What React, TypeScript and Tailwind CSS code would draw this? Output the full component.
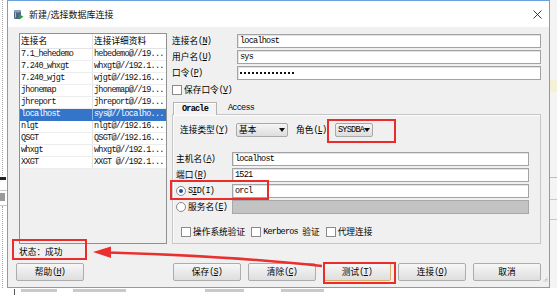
import React from "react";

const MONO = "font-['Liberation_Mono',monospace] text-[8.5px] tracking-[-0.75px] leading-none";
const CJK = "font-['Noto_Sans_CJK_SC',sans-serif] text-[8.7px] leading-none";

function K({ k }: { k: string }) {
  return (
    <span className={MONO}>
      (<span className="underline underline-offset-1">{k}</span>)
    </span>
  );
}

function Label({ text, k }: { text: string; k?: string }) {
  return (
    <span className={`${CJK} text-black whitespace-nowrap flex items-center`}>
      {text}
      {k && <K k={k} />}
    </span>
  );
}

function Input({ value, disabled, className = "" }: { value?: string; disabled?: boolean; className?: string }) {
  return (
    <div
      className={`h-[14px] border ${
        disabled ? "bg-[#c3c3c3] border-[#a8a8a8]" : "bg-white border-[#a3a3a3] shadow-[inset_1px_1px_0_#e2e2e2]"
      } flex items-center pl-[2px] ${className}`}
    >
      {value && <span className={`${MONO} text-black`}>{value}</span>}
    </div>
  );
}

function Check() {
  return <div className="w-[10px] h-[10px] bg-white border border-[#8a8a8a] shrink-0" />;
}

function Radio({ checked }: { checked?: boolean }) {
  return (
    <div className="w-[10px] h-[10px] rounded-full bg-white border border-[#8a8a8a] shrink-0 flex items-center justify-center">
      {checked && <div className="w-[4px] h-[4px] rounded-full bg-[#1d4fa6]" />}
    </div>
  );
}

function Select({ children, w }: { children: React.ReactNode; w: string }) {
  return (
    <div
      className={`${w} h-[14px] rounded-[2px] border border-[#a9a9a9] bg-gradient-to-b from-[#f5f5f5] to-[#dddddd] flex items-center justify-between pl-[2px] pr-[2px]`}
    >
      {children}
      <svg width="6" height="4" viewBox="0 0 6 4" className="shrink-0">
        <path d="M0 0 L6 0 L3 4 Z" fill="#111" />
      </svg>
    </div>
  );
}

function Button({ text, k, focus }: { text: string; k?: string; focus?: boolean }) {
  return (
    <div
      className={`w-[68px] h-[18px] rounded-[2px] border ${
        focus ? "border-[#d9ae6a]" : "border-[#acacac]"
      } bg-gradient-to-b from-[#f7f7f7] to-[#dedede] flex items-center justify-center`}
    >
      <Label text={text} k={k} />
    </div>
  );
}

const rows: [string, string][] = [
  ["7.1_hehedemo", "hebedemo@//19..."],
  ["7.240_whxgt", "whxgt@//192.1..."],
  ["7.240_wjgt", "wjgt@//192.16..."],
  ["jhonemap", "jhonemap@//19..."],
  ["jhreport", "jhreport@//19..."],
  ["localhost", "sys@//localho..."],
  ["nlgt", "nlgt@//192.16..."],
  ["QSGT", "QSGT@//192.16..."],
  ["whxgt", "whxgt@//192.1..."],
  ["XXGT", "XXGT @//192.1..."],
];

function ConnList() {
  return (
    <div className="w-[148px] h-[211px] border border-[#8e9092] bg-[#f0f0f0] flex flex-col shrink-0">
      <div className="h-[15px] bg-white flex border-b border-[#e3e3e3] shrink-0">
        <div className="w-[73px] border-r border-[#e3e3e3] pl-[1px] flex items-center">
          <Label text="连接名" />
        </div>
        <div className="flex-1 pl-[1px] flex items-center">
          <Label text="连接详细资料" />
        </div>
      </div>
      {rows.map(([a, b]) => {
        const sel = a === "localhost";
        return (
          <div
            key={a}
            className={`h-[12px] flex shrink-0 border-b ${
              sel ? "bg-[#3474c9] text-white border-[#3474c9]" : "bg-white text-[#111] border-[#ededed]"
            }`}
          >
            <div className={`w-[73px] pl-[1px] flex items-center border-r ${sel ? "border-[#8fb2e0]" : "border-[#e3e3e3]"}`}>
              <span className={`${MONO} whitespace-nowrap`}>{a}</span>
            </div>
            <div className="flex-1 pl-[1px] flex items-center overflow-hidden">
              <span className={`${MONO} whitespace-nowrap`}>{b}</span>
            </div>
          </div>
        );
      })}
    </div>
  );
}

function RightForm() {
  return (
    <div className="w-[369px] flex flex-col shrink-0">
      <div className="mt-[1px] h-[14px] flex items-center">
        <div className="w-[65px]">
          <Label text="连接名" k="N" />
        </div>
        <Input value="localhost" className="flex-1" />
      </div>
      <div className="mt-[2px] h-[14px] flex items-center">
        <div className="w-[65px]">
          <Label text="用户名" k="U" />
        </div>
        <Input value="sys" className="flex-1" />
      </div>
      <div className="mt-[2px] h-[14px] flex items-center">
        <div className="w-[65px]">
          <Label text="口令" k="P" />
        </div>
        <div className="flex-1 h-[14px] border bg-white border-[#a3a3a3] shadow-[inset_1px_1px_0_#e2e2e2] flex items-center pl-[2px] gap-[2px]">
          {Array.from({ length: 14 }).map((_, i) => (
            <div key={i} className="w-[2px] h-[2px] bg-[#111]" />
          ))}
        </div>
      </div>
      <div className="mt-[5px] h-[10px] flex items-center gap-[2px]">
        <Check />
        <Label text="保存口令" k="V" />
      </div>
      <div className="mt-[7px] h-[12px] flex items-end">
        <div className="relative z-10 ml-[1px] w-[44px] h-[13px] -mb-[1px] border border-b-0 border-[#b4b4b4] bg-[#f3f3f3] shadow-[inset_1px_1px_0_#ffffff] flex items-center justify-center">
          <span className={`${MONO} font-bold text-black`}>Oracle</span>
        </div>
        <div className="ml-[11px] h-[12px] flex items-center">
          <span className={`${MONO} text-black`}>Access</span>
        </div>
      </div>
      <div className="h-[130px] border border-[#c6c6c6] shadow-[inset_1px_1px_0_#fbfbfb] flex flex-col pt-[8px]">
        <div className="h-[14px] flex items-center pl-[7px]">
          <div className="w-[56px]">
            <Label text="连接类型" k="Y" />
          </div>
          <Select w="w-[52px]">
            <span className={`${CJK} text-black`}>基本</span>
          </Select>
          <div className="ml-[8px] w-[39px]">
            <Label text="角色" k="L" />
          </div>
          <Select w="w-[38px]">
            <span className={`${MONO} text-black`}>SYSDBA</span>
          </Select>
        </div>
        <div className="mt-[15px] h-[14px] flex items-center pl-[3px] pr-[11px]">
          <div className="w-[56px]">
            <Label text="主机名" k="A" />
          </div>
          <Input value="localhost" className="flex-1" />
        </div>
        <div className="mt-[2px] h-[14px] flex items-center pl-[3px] pr-[11px]">
          <div className="w-[56px]">
            <Label text="端口" k="R" />
          </div>
          <Input value="1521" className="flex-1" />
        </div>
        <div className="mt-[2px] h-[14px] flex items-center pl-[3px] pr-[11px]">
          <div className="w-[56px] flex items-center gap-[2px]">
            <Radio checked />
            <span className={`${MONO} text-black`}>
              S<span className="underline underline-offset-1">I</span>D(I)
            </span>
          </div>
          <Input value="orcl" className="flex-1" />
        </div>
        <div className="mt-[2px] h-[14px] flex items-center pl-[3px] pr-[11px]">
          <div className="w-[56px] flex items-center gap-[2px]">
            <Radio />
            <Label text="服务名" k="E" />
          </div>
          <Input disabled className="flex-1" />
        </div>
        <div className="mt-[13px] h-[10px] flex items-center pl-[8px]">
          <Check />
          <div className="ml-[2px]">
            <Label text="操作系统验证" />
          </div>
          <div className="ml-[6px]">
            <Check />
          </div>
          <div className="ml-[2px] flex items-center">
            <span className={`${MONO} text-black`}>Kerberos&nbsp;</span>
            <Label text="验证" />
          </div>
          <div className="ml-[6px]">
            <Check />
          </div>
          <div className="ml-[2px]">
            <Label text="代理连接" />
          </div>
        </div>
      </div>
    </div>
  );
}

function Window() {
  return (
    <div className="w-[543px] h-[288px] border border-[#6ba1dd] bg-[#f0f0f0] flex flex-col shrink-0">
      <div className="h-[26px] bg-white flex items-center pl-[5px] pr-[7px] shrink-0">
        <svg width="11" height="11" viewBox="0 0 11 11">
          <rect x="1" y="1" width="7" height="9" rx="1.5" fill="#4d6680" />
          <ellipse cx="4.5" cy="2.2" rx="3.5" ry="1.2" fill="#8aa4bf" />
          <rect x="2" y="3.5" width="1" height="5" fill="#a9bdd1" />
          <path d="M6 5 L10.5 7.8 L6 10.5 Z" fill="#2e9e3c" />
        </svg>
        <span className={`${CJK} text-[9px] text-[#111] ml-[5px]`}>新建/选择数据库连接</span>
        <svg className="ml-auto" width="9" height="9" viewBox="0 0 9 9">
          <path d="M0.5 0.5 L8.5 8.5 M8.5 0.5 L0.5 8.5" stroke="#222" strokeWidth="0.9" />
        </svg>
      </div>
      <div className="flex-1 flex flex-col">
        <div className="flex pt-[6px] pl-[11px] pr-[8px] gap-[5px]">
          <ConnList />
          <RightForm />
        </div>
        <div className="h-[16px] flex items-center pl-[11px]">
          <Label text="状态：成功" />
        </div>
        <div className="mt-[3px] h-[18px] flex pl-[8px] pr-[8px]">
          <Button text="帮助" k="H" />
          <div className="ml-auto flex gap-[7px]">
            <Button text="保存" k="S" />
            <Button text="清除" k="C" />
            <Button text="测试" k="T" focus />
            <Button text="连接" k="O" />
            <Button text="取消" />
          </div>
        </div>
        <div className="flex justify-end pr-[1px] -mt-[4px] h-[4px]">
          <svg width="5" height="5" viewBox="0 0 5 5">
            <rect x="3.5" y="0.5" width="1" height="1" fill="#b8b8b8" />
            <rect x="2" y="2" width="1" height="1" fill="#b8b8b8" />
            <rect x="3.5" y="2" width="1" height="1" fill="#b8b8b8" />
            <rect x="0.5" y="3.5" width="1" height="1" fill="#b8b8b8" />
            <rect x="2" y="3.5" width="1" height="1" fill="#b8b8b8" />
            <rect x="3.5" y="3.5" width="1" height="1" fill="#b8b8b8" />
          </svg>
        </div>
      </div>
    </div>
  );
}

export default function App() {
  return (
    <div className="relative w-[557px] h-[295px] bg-white overflow-hidden flex flex-col">
      <div className="flex h-[288px] shrink-0">
        <div className="w-[7px] h-full bg-white flex flex-col">
          <div className="ml-[2px] w-[1px] h-[175px] border-l border-dotted border-[#a0a0a0]" />
          <div className="w-[6px] h-[3px] bg-[#222] mt-[2px]" />
          <div className="w-[7px] h-[1px] bg-[#c8c8c8] mt-[10px]" />
          <div className="w-[5px] h-[8px] bg-[#9a9a9a] mt-[2px]" />
          <div className="w-[7px] h-[1px] bg-[#c8c8c8] mt-[4px]" />
          <div className="ml-[2px] w-[1px] flex-1 border-l border-dotted border-[#a0a0a0]" />
        </div>
        <Window />
        <div className="w-[7px] h-full bg-[#f4f4f4] flex flex-col">
          <div className="h-[80px]" />
          <div className="h-[12px] bg-[#f5f1d8]" />
          <div className="h-[85px]" />
          <div className="h-[1px] bg-[#bdbdbd]" />
          <div className="h-[21px]" />
          <div className="h-[1px] bg-[#c8c8c8]" />
          <div className="h-[19px]" />
          <div className="h-[1px] bg-[#c8c8c8]" />
        </div>
      </div>
      <div className="h-[7px] flex items-start pt-[1px]">
        <div className="ml-[14px] w-[1px] h-[6px] bg-[#555]" />
        <div className="ml-[6px] w-[36px] h-[3px] bg-[#c9c9c9]" />
        <div className="ml-[16px] w-[53px] h-[3px] bg-[#c9c9c9]" />
        <div className="ml-[79px] w-[39px] h-[3px] bg-[#c9c9c9]" />
        <div className="ml-[37px] w-[43px] h-[3px] bg-[#c9c9c9]" />
      </div>

      {/* red annotation boxes */}
      <div className="absolute left-[327px] top-[119px] w-[69px] h-[24px] border-2 border-[#ec2b2b]" />
      <div className="absolute left-[170px] top-[180px] w-[99px] h-[20px] border-2 border-[#ec2b2b]" />
      <div className="absolute left-[12px] top-[239px] w-[75px] h-[21px] border-2 border-[#ec2b2b]" />
      <div className="absolute left-[323px] top-[262px] w-[73px] h-[22px] border-2 border-[#ec2b2b]" />
      <svg className="absolute left-0 top-0" width="557" height="295" viewBox="0 0 557 295">
        <path d="M108 252.5 Q 230 256 322 266" stroke="#e8302f" strokeWidth="2.6" fill="none" />
        <path d="M93 252 L111 246.5 L111 258 Z" fill="#e8302f" />
      </svg>
    </div>
  );
}
